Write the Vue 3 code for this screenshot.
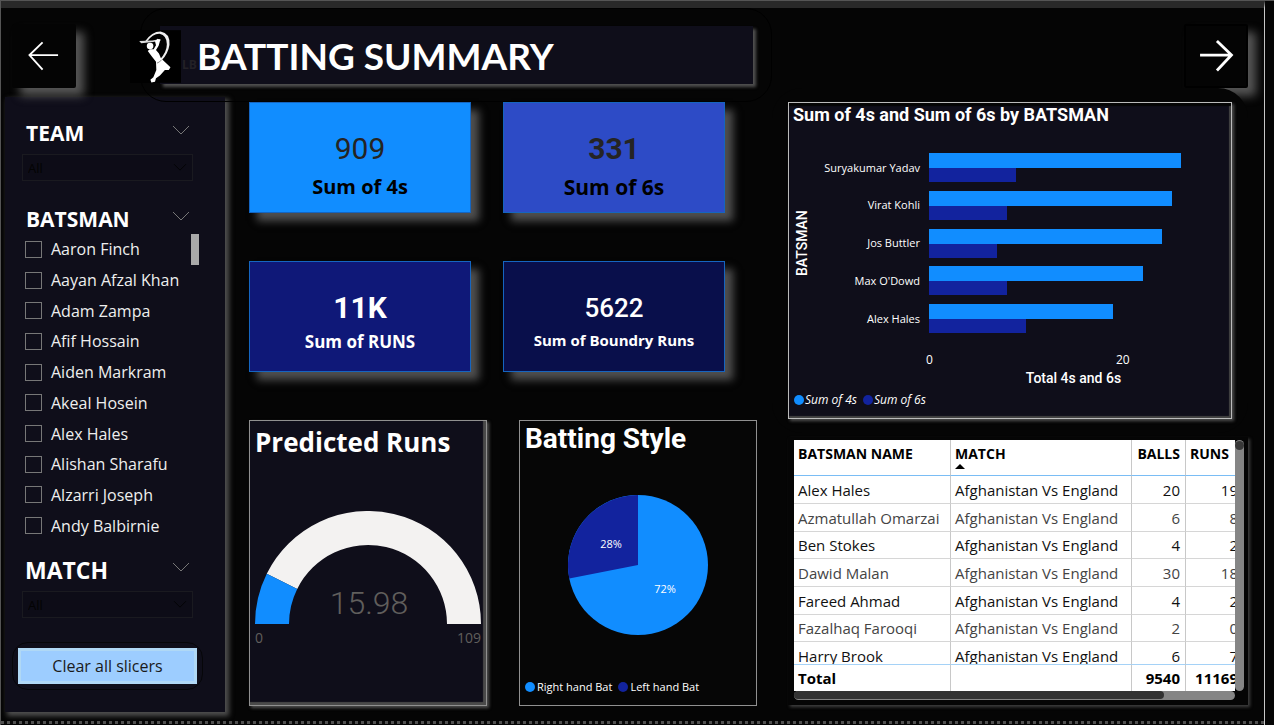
<script setup>
import { ref } from 'vue'

const batsmen = ref([
  'Aaron Finch', 'Aayan Afzal Khan', 'Adam Zampa', 'Afif Hossain', 'Aiden Markram',
  'Akeal Hosein', 'Alex Hales', 'Alishan Sharafu', 'Alzarri Joseph', 'Andy Balbirnie',
].map((name) => ({ name, checked: false })))
const team = ref('All')
const match = ref('All')

function clearAll() {
  team.value = 'All'
  match.value = 'All'
  batsmen.value.forEach((b) => { b.checked = false })
}

const cards = [
  { value: '909', label: 'Sum of 4s', kind: 'fours' },
  { value: '331', label: 'Sum of 6s', kind: 'sixes' },
  { value: '11K', label: 'Sum of RUNS', kind: 'runs' },
  { value: '5622', label: 'Sum of Boundry Runs', kind: 'boundary' },
]

const axisMax = 30.7
const bars = [
  { name: 'Suryakumar Yadav', fours: 26, sixes: 9 },
  { name: 'Virat Kohli', fours: 25, sixes: 8 },
  { name: 'Jos Buttler', fours: 24, sixes: 7 },
  { name: "Max O'Dowd", fours: 22, sixes: 8 },
  { name: 'Alex Hales', fours: 19, sixes: 10 },
]
const pct = (v) => (v / axisMax) * 100 + '%'

const rows = [
  ['Alex Hales', 20, 19], ['Azmatullah Omarzai', 6, 8], ['Ben Stokes', 4, 2],
  ['Dawid Malan', 30, 18], ['Fareed Ahmad', 4, 2], ['Fazalhaq Farooqi', 2, 0],
  ['Harry Brook', 6, 7],
]

function ring(cx, cy, outer, inner, from, to) {
  const p = (r, f) => {
    const a = Math.PI * (1 - f)
    return `${(cx + r * Math.cos(a)).toFixed(2)} ${(cy - r * Math.sin(a)).toFixed(2)}`
  }
  return `M${p(outer, from)}A${outer} ${outer} 0 0 1 ${p(outer, to)}L${p(inner, to)}A${inner} ${inner} 0 0 0 ${p(inner, from)}Z`
}
const share = 15.98 / 109
const gaugeFill = ring(113, 113, 113, 79, 0, share)
const gaugeRest = ring(113, 113, 113, 79, share, 1)
</script>

<template>
  <div class="page">
    <div class="canvas">
      <header class="header">
        <button class="nav back" aria-label="Back">
          <svg viewBox="0 0 64 64"><path d="M47 31H17M30.500 17.500L16.500 31L30.500 46.500" /></svg>
        </button>
        <svg class="logo" viewBox="390 90 155 160" aria-hidden="true">
          <rect x="390" y="90" width="155" height="160" fill="#000" />
          <path d="M436 124Q456 94 483 94Q512 99 510 134Q506 162 485 183L481 179Q502 156 502 133Q502 106 480 101Q460 100 440 126Z" fill="#eee" />
          <path d="M418 123L458 121L482 117L483 121L460 126L424 130Z" fill="#ddd" />
          <circle cx="451" cy="138" r="10" fill="#fff" />
          <path d="M466 124L474 116L482 120L477 137L469 150L478 161L484 175L496 187L513 203L508 211L496 211L481 228L469 236L466 247L455 249L452 241L461 233L470 211L469 186L457 171L444 153L450 148L462 148L469 136Z" fill="#fff" />
          <path d="M472 190Q480 188 486 180" fill="none" stroke="#555" stroke-width="2" />
        </svg>
        <div class="banner">
          <span class="ghost" aria-hidden="true">LB</span>
          <h1>BATTING SUMMARY</h1>
        </div>
        <button class="nav next" aria-label="Next">
          <svg viewBox="0 0 64 64"><path d="M15 31H48M33 16L48.500 31L33 47.500" /></svg>
        </button>
      </header>

      <main class="main">
        <aside class="sidebar">
          <section class="slicer">
            <div class="slicer-head">
              <label for="team">TEAM</label>
              <svg class="chev" viewBox="0 0 16 9"><path d="M0 0L8 8L16 0" /></svg>
            </div>
            <div class="drop">
              <select id="team" v-model="team"><option>All</option></select>
              <svg class="chev dark" viewBox="0 0 16 9"><path d="M0 0L8 8L16 0" /></svg>
            </div>
          </section>
          <section class="slicer batsman">
            <div class="slicer-head">
              <h2>BATSMAN</h2>
              <svg class="chev" viewBox="0 0 16 9"><path d="M0 0L8 8L16 0" /></svg>
            </div>
            <div class="list">
              <ul>
                <li v-for="b in batsmen" :key="b.name">
                  <label><input v-model="b.checked" type="checkbox" />{{ b.name }}</label>
                </li>
              </ul>
              <span class="thumb"></span>
            </div>
          </section>
          <section class="slicer match">
            <div class="slicer-head">
              <label for="match">MATCH</label>
              <svg class="chev" viewBox="0 0 16 9"><path d="M0 0L8 8L16 0" /></svg>
            </div>
            <div class="drop">
              <select id="match" v-model="match"><option>All</option></select>
              <svg class="chev dark" viewBox="0 0 16 9"><path d="M0 0L8 8L16 0" /></svg>
            </div>
          </section>
          <div class="clear-wrap">
            <button class="clear" @click="clearAll">Clear all slicers</button>
          </div>
        </aside>

        <div class="middle">
          <div class="cards">
            <div v-for="c in cards" :key="c.label" class="card" :class="c.kind">
              <div class="num">{{ c.value }}</div>
              <div class="cap">{{ c.label }}</div>
            </div>
          </div>
          <div class="panels">
            <section class="panel gauge">
              <h2>Predicted Runs</h2>
              <svg class="gauge-svg" viewBox="0 0 226 113">
                <path :d="gaugeRest" fill="#f3f2f1" />
                <path :d="gaugeFill" fill="#118dff" />
                <text x="114" y="103" text-anchor="middle">15.98</text>
              </svg>
              <div class="ends"><span>0</span><span>109</span></div>
            </section>
            <section class="panel style">
              <h2>Batting Style</h2>
              <svg class="pie" viewBox="0 0 140 140">
                <circle cx="70" cy="70" r="70" fill="#118dff" />
                <path d="M70 70V0A70 70 0 0 0 1.300 83.500Z" fill="#12239e" />
                <text x="43" y="53" text-anchor="middle">28%</text>
                <text x="97" y="98" text-anchor="middle">72%</text>
              </svg>
              <div class="legend">
                <span><i class="dot light"></i>Right hand Bat</span>
                <span><i class="dot deep"></i>Left hand Bat</span>
              </div>
            </section>
          </div>
        </div>

        <div class="right">
          <section class="panel chart">
            <h2>Sum of 4s and Sum of 6s by BATSMAN</h2>
            <div class="plot">
              <div class="ytitle">BATSMAN</div>
              <div class="bars">
                <div v-for="b in bars" :key="b.name" class="bar-row">
                  <span class="name">{{ b.name }}</span>
                  <div class="pair">
                    <div class="bar light" :style="{ width: pct(b.fours) }"></div>
                    <div class="bar deep" :style="{ width: pct(b.sixes) }"></div>
                  </div>
                </div>
              </div>
            </div>
            <div class="axis"><span>0</span><span class="twenty">20</span></div>
            <div class="xtitle">Total 4s and 6s</div>
            <div class="legend italic">
              <span><i class="dot light"></i>Sum of 4s</span>
              <span><i class="dot deep"></i>Sum of 6s</span>
            </div>
          </section>

          <section class="grid-box">
            <div class="grid-view">
              <table>
                <colgroup><col class="c1" /><col class="c2" /><col class="c3" /><col class="c4" /></colgroup>
                <thead>
                  <tr>
                    <th>BATSMAN NAME</th>
                    <th>MATCH<svg class="sort" viewBox="0 0 10 5"><path d="M0 5L5 0L10 5Z" /></svg></th>
                    <th class="n">BALLS</th>
                    <th>RUNS</th>
                  </tr>
                </thead>
                <tbody>
                  <tr v-for="r in rows" :key="r[0]">
                    <td>{{ r[0] }}</td><td>Afghanistan Vs England</td>
                    <td class="n">{{ r[1] }}</td><td class="n">{{ r[2] }}</td>
                  </tr>
                </tbody>
                <tfoot>
                  <tr><td>Total</td><td></td><td class="n">9540</td><td class="n">11169</td></tr>
                </tfoot>
              </table>
            </div>
            <div class="vbar"><span></span></div>
            <div class="hbar"><span></span></div>
          </section>
        </div>
      </main>
      <div class="dotted"></div>
    </div>
  </div>
</template>

<style>
html, body { background: #050505; }
body { margin: 0; }
</style>

<style scoped>
* { box-sizing: border-box; }
h1, h2, ul { margin: 0; padding: 0; }
button { font: inherit; cursor: pointer; }
.page {
  min-height: 100vh;
  padding-right: 9px;
  background: #050505;
  border-top: 1px solid #555;
  border-left: 1px solid #555;
  font-family: "Open Sans", "Noto Sans", sans-serif;
  color: #fff;
  display: flex;
}
.canvas {
  flex: 1;
  min-width: 0;
  border-right: 1px solid #c8c8c8;
  border-top: 7px solid #292929;
  display: flex;
  flex-direction: column;
}
.header { display: flex; align-items: flex-start; padding: 16px 16px 9px 11px; }
.nav {
  width: 64px;
  height: 64px;
  padding: 0;
  border: 2px solid #000;
  border-radius: 2px;
  background: #040404;
  box-shadow: 8px 8px 10px #555;
}
.nav svg { display: block; width: 60px; height: 60px; }
.nav path { fill: none; stroke: #fff; stroke-width: 2; }
.back { position: relative; border-color: #040404; }
.next { margin-left: auto; }
.next path { stroke-width: 3; }
.logo { width: 51px; height: 53px; margin: 6px -21px 0 54px; position: relative; z-index: 1; flex: none; }
.banner {
  position: relative;
  flex: 0 1 593px;
  height: 58px;
  margin-top: 2px;
  padding-left: 22px;
  display: flex;
  align-items: center;
  background: #0f0e1a;
  box-shadow: 3px 3px 3px #505050;
}
.banner::before {
  content: "";
  position: absolute;
  inset: -18px -19px -18px -20px;
  border: 1px solid #000;
  border-radius: 26px;
}
.ghost { width: 15px; font-size: 12px; font-weight: 700; color: #232126; padding-top: 18px; }
h1 { font-family: Lato, sans-serif; font-size: 37px; line-height: 48px; font-weight: 700; white-space: nowrap; padding-top: 1px; }
.main {
  flex: 1;
  display: grid;
  grid-template-columns: minmax(0, 220fr) minmax(0, 508fr) minmax(0, 467fr);
  column-gap: 24px;
  padding: 0 16px 0 4px;
}
.sidebar {
  background: #0f0e1a;
  box-shadow: 3px 3px 5px 1px #505050;
  padding: 21px 28px 22px 13px;
  display: flex;
  flex-direction: column;
}
.slicer { padding: 0 4px; }
.slicer-head {
  height: 30px;
  display: flex;
  align-items: center;
  justify-content: space-between;
  padding: 0 4px;
  font-size: 21px;
  font-weight: 700;
}
.match .slicer-head { font-size: 23px; padding-left: 3px; }
.slicer-head h2 { font-size: inherit; }
.slicer-head label { font-weight: inherit; }
.chev { width: 16px; height: 9px; margin-bottom: 5px; flex: none; overflow: visible; }
.chev path { fill: none; stroke: #777; stroke-width: 1; }
.drop { position: relative; margin-top: 6px; }
.drop select {
  appearance: none;
  display: block;
  width: 100%;
  height: 27px;
  padding: 0 5px;
  border: 1px solid #1a1a20;
  background: #0d0c17;
  color: #030303;
  font: 400 13px "Open Sans", sans-serif;
}
.chev.dark { position: absolute; right: 7px; top: 10px; width: 12px; height: 7px; }
.chev.dark path { stroke: #000; }
.batsman { margin-top: 23px; }
.list { display: flex; justify-content: space-between; margin-right: -6px; }
.list ul { list-style: none; height: 307px; display: flex; flex-direction: column; padding-left: 3px; white-space: nowrap; }
.list li { flex: 1; display: flex; align-items: center; }
.list label { display: flex; align-items: center; gap: 9px; font-size: 16px; line-height: 22px; color: #eee; }
.list input { appearance: none; margin: 0; width: 17px; height: 17px; border: 1px solid #777; }
.list input:checked { background: #118dff; }
.thumb { width: 8px; height: 31px; background: #a9a9a9; flex: none; }
.match { margin-top: 14px; }
.clear-wrap {
  margin: 24px -6px 0;
  padding: 5px;
  border: 1px solid #060609;
  border-radius: 16px;
}
.clear {
  display: block;
  width: 100%;
  height: 36px;
  padding: 0;
  border: 3px solid #b0d8f5;
  background: #9dcdff;
  color: #1a1a1a;
  font-size: 16px;
}
.middle { padding: 5px 0 6px; display: flex; flex-direction: column; }
.cards { display: grid; grid-template-columns: 1fr 1fr; gap: 48px 32px; margin-right: 32px; }
.card {
  position: relative;
  height: 111px;
  border: 1px solid #1565c0;
  text-align: center;
  font-weight: 700;
  box-shadow: 8px 8px 8px #505050;
  display: flex;
  flex-direction: column;
  align-items: center;
  padding-top: 29px;
}
.num { font-family: Roboto, sans-serif; font-size: 30px; line-height: 34px; }
.cap { font-size: 20px; line-height: 26px; margin-top: 8px; }
.fours { background: #118dff; color: #000; }
.fours .num { font-weight: 400; color: #252423; }
.sixes { background: #2d4bc6; color: #000; }
.sixes .num { color: #252423; }
.sixes .cap { font-size: 21px; }
.runs { background: #0f1878; }
.boundary { background: #090f4b; }
.runs .cap { font-size: 17px; line-height: 22px; margin-top: 6px; }
.boundary .num { font-weight: 500; font-size: 26px; }
.boundary .cap { font-size: 15px; line-height: 22px; margin-top: 4px; }
.panels { display: grid; grid-template-columns: 1fr 1fr; gap: 32px; margin-top: 48px; flex: 1; }
.panel { border: 1px solid #909090; display: flex; flex-direction: column; min-width: 0; }
.panel h2 { white-space: nowrap; }
.gauge { background: #0f0e1a; padding: 3px 5px; box-shadow: inset -3px -3px 1px #4a4a4a, 2px 2px 3px #505050; }
.gauge h2 { font-size: 26px; line-height: 36px; }
.gauge-svg { display: block; width: 100%; margin-top: 51px; }
.gauge-svg text { font: 300 32px Roboto, sans-serif; fill: #605e5c; }
.ends { display: flex; justify-content: space-between; color: #605e5c; font-size: 14px; line-height: 20px; margin-top: 4px; }
.style { background: #060606; padding: 0 5px 8px; }
.style h2 { font-family: Roboto, sans-serif; font-size: 28px; line-height: 36px; }
.pie { width: 140px; height: 140px; align-self: center; margin-top: 38px; }
.pie text { font: 11px "Open Sans", sans-serif; fill: #fff; }
.legend { display: flex; gap: 6px; font-size: 11px; line-height: 20px; white-space: nowrap; margin-top: auto; }
.legend span { display: flex; align-items: center; gap: 2px; }
.dot { width: 10px; height: 10px; border-radius: 50%; }
.light { background: #118dff; }
.deep { background: #12239e; }
.italic { font-style: italic; font-size: 12px; padding-left: 1px; }
.italic span { gap: 1px; }
.right { position: relative; z-index: 0; display: flex; flex-direction: column; padding: 5px 0 0 7px; }
.chart {
  position: relative;
  height: 317px;
  margin-right: 16px;
  padding: 0 4px 8px;
  border-color: #bbb;
  background: #0f0e1a;
  box-shadow: inset 0 3px 1px #050505, inset -2px -2px 1px #444, 2px 2px 3px #505050;
}
.chart::before {
  content: "";
  position: absolute;
  inset: -15px -17px;
  z-index: -1;
  border-radius: 30px;
  background: #050505;
}
.chart h2 { font-family: Roboto, sans-serif; font-size: 18px; line-height: 24px; }
.plot { display: flex; margin-top: 26px; }
.ytitle {
  writing-mode: vertical-rl;
  transform: rotate(180deg);
  text-align: center;
  width: 18px;
  font: 500 14px/18px Roboto, sans-serif;
}
.bars { flex: 1; height: 180px; display: flex; flex-direction: column; justify-content: space-between; }
.bar-row { display: flex; align-items: center; }
.name { width: 109px; text-align: right; font-size: 11px; line-height: 16px; margin-right: 9px; white-space: nowrap; }
.pair { flex: 1; }
.bar { height: 15px; }
.bar.deep { height: 14px; }
.axis { display: grid; grid-template-columns: 194px auto; margin: 18px 0 0 133px; font-size: 12px; line-height: 18px; }
.twenty { margin-left: -4px; }
.xtitle { margin-left: 127px; text-align: center; font: 500 14px/18px Roboto, sans-serif; }
.grid-box {
  margin-top: 18px;
  padding: 3px 4px 5px 6px;
  display: grid;
  grid-template-columns: minmax(0, 1fr) 9px;
  background: #050505;
  box-shadow: 2px 2px 3px #404040;
}
.grid-view { height: 251px; overflow: hidden; background: #fff; color: #111; }
table { table-layout: fixed; width: 450px; border-collapse: separate; border-spacing: 0; font-size: 15px; line-height: 20px; }
.c1 { width: 157px; }
.c2 { width: 181px; }
.c3 { width: 54px; }
.c4 { width: 58px; }
th, td { padding: 0 5px 0 4px; text-align: left; white-space: nowrap; border-right: 1px solid #c8c8c8; }
th { height: 36px; padding-top: 4px; vertical-align: top; font-size: 14px; color: #000; border-bottom: 1px solid #7abdf5; }
tbody td { height: 28px; border-bottom: 1px solid #d6d6d6; }
tbody tr:nth-child(3n) td { height: 27px; }
tbody tr:nth-child(even) { color: #444; }
.n { text-align: right; }
.sort { display: block; width: 10px; height: 5px; }
tfoot td { position: sticky; bottom: 0; height: 27px; background: #fff; font-weight: 700; color: #000; border-top: 1px solid #a5d2f7; }
.vbar { background: #858585; border-radius: 5px; }
.vbar span { display: block; height: 9px; margin-top: 1px; border-radius: 5px; background: #383838; }
.hbar { height: 9px; background: #858585; border-radius: 5px; }
.hbar span { display: block; width: 84%; height: 8px; border-radius: 5px; background: #333; }
.dotted { height: 3px; margin: 9px 0 1px; background: repeating-linear-gradient(90deg, #505050 0 3px, #0a0a0a 3px 6px); }
</style>
